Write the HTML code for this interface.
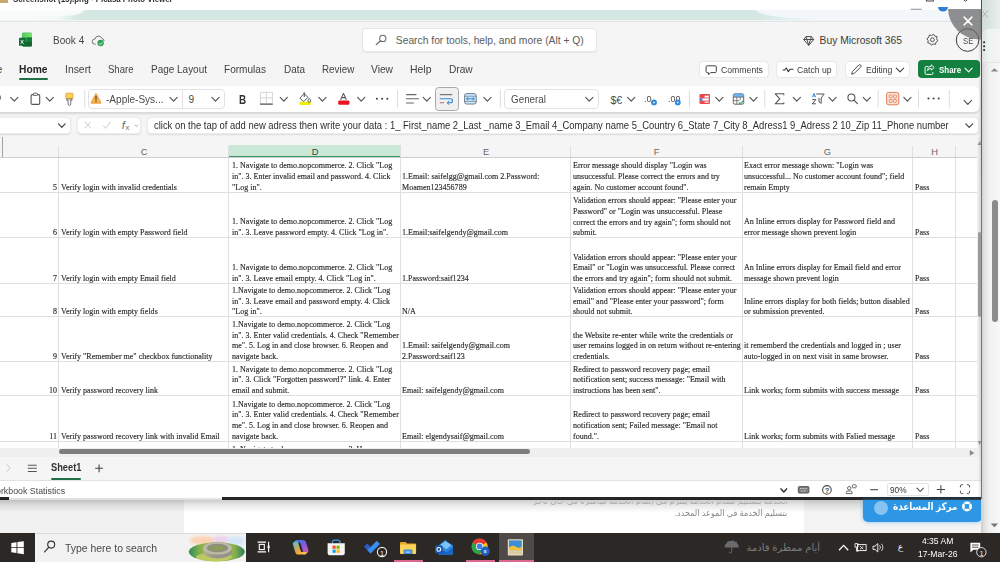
<!DOCTYPE html>
<html lang="en">
<head>
<meta charset="utf-8">
<title>Book 4</title>
<style>
*{box-sizing:border-box;margin:0;padding:0}
html,body{width:1000px;height:562px;overflow:hidden;background:#fff}
body{position:relative;font-family:"Liberation Sans",sans-serif;color:#2b2b2b;font-size:10px}
.a{position:absolute}
.t{position:absolute;white-space:nowrap;line-height:1;transform-origin:0 50%}
.ar{font-family:"Liberation Sans","DejaVu Sans",sans-serif;direction:rtl;transform-origin:100% 50%}
.c{position:absolute;font-family:"Liberation Serif",serif;font-size:8.7px;line-height:10.65px;color:#2c2c2c;-webkit-text-stroke:.16px #2c2c2c;white-space:nowrap;transform:scaleX(.924);transform-origin:0 0}
.n{transform-origin:100% 0;text-align:right}
.hl{position:absolute;left:0;width:977px;height:1px;background:#dfdfdf}
.vl{position:absolute;top:146px;width:1px;height:302px;background:#dfdfdf}
.ch{position:absolute;font-size:9.3px;color:#666;line-height:1;width:20px;margin-left:-10px;text-align:center}
.bx{position:absolute;background:#fff;border:1px solid #e3e3e3;border-radius:4px}
#ic{position:absolute;left:0;top:0;width:1000px;height:562px;overflow:hidden}
</style>
</head>
<body>
<div class="a" style="left:0;top:0;width:1000px;height:22px;background:#fff;overflow:hidden">
<div class="a" style="left:0;top:0;width:7.8px;height:2.8px;background:#c9a871"></div>
<div class="t" style="left:12.5px;top:-5px;font-size:9px;color:#2e2e2e;font-weight:bold;transform:scaleX(.875)">Screenshot (15).png - Picasa Photo Viewer</div>
<div class="a" style="left:0;top:9.5px;width:981px;height:10.5px;box-shadow:0 1px 0 #edf4f2;background:linear-gradient(90deg,#f8fbfa 0,#f4f9f8 6%,#d9eae7 7.6%,#d4e7e3 9%,#d4e7e3 77%,#e3efee 80%,#f2f7f9 83%,#f2f7f9 100%)"></div>
<div class="a" style="left:0;top:9.5px;width:84px;height:6px;background:#f8fbfa;border-radius:0 0 22px 0/0 0 6px 0"></div>
<div class="a" style="left:756px;top:9.5px;width:225px;height:8.5px;background:#f3f7fa;border-radius:0 0 0 56px/0 0 0 9px"></div>
</div>
<div class="a" style="left:0;top:21px;width:981px;height:477px;background:#f5f5f5;border-top:1px solid #e3e6e6"></div>
<div class="t" style="top:35.80px;font-size:10.4px;color:#444;left:52.6px;transform:scaleX(0.965);">Book 4</div>
<div class="bx" style="left:362px;top:28px;width:234.5px;height:23.5px;border-color:#e6e6e6;box-shadow:0 1px 1.5px rgba(0,0,0,.06)"></div>
<div class="t" style="top:35.68px;font-size:10.3px;color:#5c5c5c;left:395.8px;">Search for tools, help, and more (Alt + Q)</div>
<div class="t" style="top:35.78px;font-size:10.3px;color:#3b3b3b;left:819.6px;">Buy Microsoft 365</div>
<div class="t" style="top:37.02px;font-size:8.6px;color:#444;left:963px;transform:scaleX(0.9);">SE</div>
<div class="t" style="top:65.28px;font-size:10.3px;color:#424242;left:-3.5px;">e</div>
<div class="t" style="top:65.28px;font-size:10.3px;color:#242424;left:19.2px;font-weight:bold;transform:scaleX(0.995);">Home</div>
<div class="t" style="top:65.28px;font-size:10.3px;color:#424242;left:64.5px;transform:scaleX(1.009);">Insert</div>
<div class="t" style="top:65.28px;font-size:10.3px;color:#424242;left:107.5px;transform:scaleX(0.928);">Share</div>
<div class="t" style="top:65.28px;font-size:10.3px;color:#424242;left:150.5px;transform:scaleX(0.968);">Page Layout</div>
<div class="t" style="top:65.28px;font-size:10.3px;color:#424242;left:224px;transform:scaleX(0.978);">Formulas</div>
<div class="t" style="top:65.28px;font-size:10.3px;color:#424242;left:283.5px;transform:scaleX(0.965);">Data</div>
<div class="t" style="top:65.28px;font-size:10.3px;color:#424242;left:321.7px;transform:scaleX(0.956);">Review</div>
<div class="t" style="top:65.28px;font-size:10.3px;color:#424242;left:371px;transform:scaleX(0.993);">View</div>
<div class="t" style="top:65.28px;font-size:10.3px;color:#424242;left:410px;transform:scaleX(1.014);">Help</div>
<div class="t" style="top:65.28px;font-size:10.3px;color:#424242;left:448.8px;transform:scaleX(0.986);">Draw</div>
<div class="a" style="left:19px;top:78.2px;width:28.5px;height:2.2px;background:#1e7145;border-radius:1px"></div>
<div class="bx" style="left:699.3px;top:61px;width:69.5px;height:16.6px;border-color:#e8e8e8"></div>
<div class="bx" style="left:775.5px;top:61px;width:61.5px;height:16.6px;border-color:#e8e8e8"></div>
<div class="bx" style="left:844.7px;top:61px;width:65.8px;height:16.6px;border-color:#e8e8e8"></div>
<div class="a" style="left:917.5px;top:60.4px;width:62px;height:17.8px;background:#13803f;border-radius:4px"></div>
<div class="t" style="top:66.27px;font-size:8.9px;color:#3b3b3b;left:720.7px;transform:scaleX(0.978);">Comments</div>
<div class="t" style="top:66.27px;font-size:8.9px;color:#3b3b3b;left:796.9px;transform:scaleX(0.975);">Catch up</div>
<div class="t" style="top:66.27px;font-size:8.9px;color:#3b3b3b;left:866.4px;transform:scaleX(0.972);">Editing</div>
<div class="t" style="top:66.02px;font-size:8.6px;color:#fff;left:939.4px;font-weight:bold;transform:scaleX(0.925);">Share</div>
<div class="a" style="left:-10px;top:85.6px;width:989.5px;height:26.6px;background:#fff;border-radius:6px;box-shadow:0 1.6px 2.4px rgba(0,0,0,.13)"></div>
<div class="bx" style="left:88.3px;top:89px;width:136.3px;height:19.6px;border-color:#e2e2e2"></div>
<div class="a" style="left:182.3px;top:89.5px;width:1px;height:18.6px;background:#e2e2e2"></div>
<div class="t" style="top:95.05px;font-size:10.1px;color:#4a4a4a;left:105.6px;transform:scaleX(0.995);">-Apple-Sys...</div>
<div class="t" style="top:95.05px;font-size:10.1px;color:#4a4a4a;left:188.6px;">9</div>
<div class="t" style="top:93.40px;font-size:13px;color:#333;left:239.4px;font-weight:bold;transform:scaleX(0.76);">B</div>
<div class="a" style="left:435.2px;top:87.2px;width:23.4px;height:23.4px;border:1px solid #a9a9a9;border-radius:3.5px;background:#f0f0f0"></div>
<div class="bx" style="left:503.8px;top:88.8px;width:94.8px;height:20.2px;border-color:#e2e2e2"></div>
<div class="t" style="top:95.05px;font-size:10.1px;color:#4a4a4a;left:510.6px;transform:scaleX(0.975);">General</div>
<div class="t" style="top:94.83px;font-size:10.6px;color:#4a4a4a;left:610.4px;">$€</div>
<div class="t" style="top:93.67px;font-size:9.6px;color:#4a4a4a;left:644.2px;transform:scaleX(0.95);">.0</div>
<div class="t" style="top:93.67px;font-size:9.6px;color:#4a4a4a;left:667.8px;transform:scaleX(0.93);">.00</div>
<div class="bx" style="left:-5px;top:117.4px;width:75.5px;height:17px;border-color:#ececec;box-shadow:0 .5px 1.5px rgba(0,0,0,.1)"></div>
<div class="bx" style="left:77.3px;top:117.4px;width:63.8px;height:17px;border-color:#ececec;box-shadow:0 .5px 1.5px rgba(0,0,0,.1)"></div>
<div class="bx" style="left:147px;top:117.4px;width:831.6px;height:17px;border-color:#ececec;box-shadow:0 .5px 1.5px rgba(0,0,0,.1)"></div>
<div class="t" style="top:120.88px;font-size:10.3px;color:#2e2e2e;left:154px;transform:scaleX(0.9161);">click on the tap of add new adress then write your data : 1_ First_name 2_Last _name 3_Email 4_Company name 5_Country 6_State 7_City 8_Adress1 9_Adress 2 10_Zip 11_Phone number</div>
<div class="t" style="top:119.57px;font-size:11.5px;color:#6b6b6b;left:121.8px;font-style:italic;font-family:"Liberation Serif",serif;">f</div>
<div class="t" style="top:124.47px;font-size:7.6px;color:#6b6b6b;left:125.6px;font-family:"Liberation Serif",serif;">x</div>
<div class="a" style="left:0;top:157px;width:977px;height:291.6px;background:#fff"></div>
<div class="a" style="left:977px;top:137px;width:4px;height:320px;background:#efefef"></div>
<div class="a" style="left:228.8px;top:144.8px;width:171.9px;height:12.6px;background:#cbe7d6"></div>
<div class="a" style="left:228.8px;top:155.8px;width:171.9px;height:1.8px;background:#3a9666"></div>
<div class="a" style="left:2px;top:137px;width:1.2px;height:20px;background:#a2a2a2"></div>
<div class="vl" style="left:57.9px"></div>
<div class="vl" style="left:228.3px"></div>
<div class="vl" style="left:400.0px"></div>
<div class="vl" style="left:569.9px"></div>
<div class="vl" style="left:741.5px"></div>
<div class="vl" style="left:912.1px"></div>
<div class="vl" style="left:954.9px"></div>
<div class="ch" style="left:144px;top:147.73px;">C</div>
<div class="ch" style="left:315px;top:147.73px;color:#2c4a3a;">D</div>
<div class="ch" style="left:486px;top:147.73px;">E</div>
<div class="ch" style="left:656.6px;top:147.73px;">F</div>
<div class="ch" style="left:827.4px;top:147.73px;">G</div>
<div class="ch" style="left:934.5px;top:147.73px;">H</div>
<div class="hl" style="top:156.8px;background:#cfcfcf"></div>
<div class="hl" style="top:191.6px"></div>
<div class="hl" style="top:237.1px"></div>
<div class="hl" style="top:282.9px"></div>
<div class="hl" style="top:316.4px"></div>
<div class="hl" style="top:361.0px"></div>
<div class="hl" style="top:395.1px"></div>
<div class="hl" style="top:440.5px"></div>
<div class="c n" style="left:27px;width:30px;top:181.64px">5</div>
<div class="c" style="left:60.6px;top:181.64px">Verify login with invalid credentials</div>
<div class="c" style="left:231.6px;top:160.34px">1. Navigate to demo.nopcommerce. 2. Click "Log<br>in". 3. Enter invalid email and password. 4. Click<br>"Log in".</div>
<div class="c" style="left:402px;top:170.99px">1.Email: saifelgg@gmail.com 2.Password:<br>Moamen123456789</div>
<div class="c" style="left:572.5px;top:160.34px">Error message should display "Login was<br>unsuccessful. Please correct the errors and try<br>again. No customer account found".</div>
<div class="c" style="left:743.7px;top:160.34px">Exact error message shown: "Login was<br>unsuccessful... No customer account found"; field<br>remain Empty</div>
<div class="c" style="left:914.8px;top:181.64px">Pass</div>
<div class="c n" style="left:27px;width:30px;top:227.14px">6</div>
<div class="c" style="left:60.6px;top:227.14px">Verify login with empty Password field</div>
<div class="c" style="left:231.6px;top:216.49px">1. Navigate to demo.nopcommerce. 2. Click "Log<br>in". 3. Leave password empty. 4. Click "Log in".</div>
<div class="c" style="left:402px;top:227.14px">1.Email:saifelgendy@gmail.com</div>
<div class="c" style="left:572.5px;top:195.19px">Validation errors should appear: "Please enter your<br>Password" or "Login was unsuccessful. Please<br>correct the errors and try again"; form should not<br>submit.</div>
<div class="c" style="left:743.7px;top:216.49px">An Inline errors display for Password field and<br>error message shown prevent login</div>
<div class="c" style="left:914.8px;top:227.14px">Pass</div>
<div class="c n" style="left:27px;width:30px;top:272.94px">7</div>
<div class="c" style="left:60.6px;top:272.94px">Verify login with empty Email field</div>
<div class="c" style="left:231.6px;top:262.29px">1. Navigate to demo.nopcommerce. 2. Click "Log<br>in". 3. Leave email empty. 4. Click "Log in".</div>
<div class="c" style="left:402px;top:272.94px">1.Password:saif1234</div>
<div class="c" style="left:572.5px;top:251.64px">Validation errors should appear: "Please enter your<br>Email" or "Login was unsuccessful. Please correct<br>the errors and try again"; form should not submit.</div>
<div class="c" style="left:743.7px;top:262.29px">An Inline errors display for Email field and error<br>message shown prevent login</div>
<div class="c" style="left:914.8px;top:272.94px">Pass</div>
<div class="c n" style="left:27px;width:30px;top:306.44px">8</div>
<div class="c" style="left:60.6px;top:306.44px">Verify login with empty fields</div>
<div class="c" style="left:231.6px;top:285.14px">1.Navigate to demo.nopcommerce. 2. Click "Log<br>in". 3. Leave email and password empty. 4. Click<br>"Log in".</div>
<div class="c" style="left:402px;top:306.44px">N/A</div>
<div class="c" style="left:572.5px;top:285.14px">Validation errors should appear: "Please enter your<br>email" and "Please enter your password"; form<br>should not submit.</div>
<div class="c" style="left:743.7px;top:295.79px">Inline errors display for both fields; button disabled<br>or submission prevented.</div>
<div class="c" style="left:914.8px;top:306.44px">Pass</div>
<div class="c n" style="left:27px;width:30px;top:351.04px">9</div>
<div class="c" style="left:60.6px;top:351.04px">Verify "Remember me" checkbox functionality</div>
<div class="c" style="left:231.6px;top:319.09px">1.Navigate to demo.nopcommerce. 2. Click "Log<br>in". 3. Enter valid credentials. 4. Check "Remember<br>me". 5. Log in and close browser. 6. Reopen and<br>navigate back.</div>
<div class="c" style="left:402px;top:340.39px">1.Email: saifelgendy@gmail.com<br>2.Password:saif123</div>
<div class="c" style="left:572.5px;top:329.74px">the Website re-enter while write the credentials or<br>user remains logged in on return without re-entering<br>credentials.</div>
<div class="c" style="left:743.7px;top:340.39px">it rememberd the credentials and logged in ; user<br>auto-logged in on next visit in same browser.</div>
<div class="c" style="left:914.8px;top:351.04px">Pass</div>
<div class="c n" style="left:27px;width:30px;top:385.14px">10</div>
<div class="c" style="left:60.6px;top:385.14px">Verify password recovery link</div>
<div class="c" style="left:231.6px;top:363.84px">1. Navigate to demo.nopcommerce. 2. Click "Log<br>in". 3. Click "Forgotten password?" link. 4. Enter<br>email and submit.</div>
<div class="c" style="left:402px;top:385.14px">Email: saifelgendy@gmail.com</div>
<div class="c" style="left:572.5px;top:363.84px">Redirect to password recovery page; email<br>notification sent; success message: "Email with<br>instructions has been sent".</div>
<div class="c" style="left:743.7px;top:385.14px">Link works; form submits with success message</div>
<div class="c" style="left:914.8px;top:385.14px">Pass</div>
<div class="c n" style="left:27px;width:30px;top:430.54px">11</div>
<div class="c" style="left:60.6px;top:430.54px">Verify password recovery link with invalid Email</div>
<div class="c" style="left:231.6px;top:398.59px">1.Navigate to demo.nopcommerce. 2. Click "Log<br>in". 3. Enter valid credentials. 4. Check "Remember<br>me". 5. Log in and close browser. 6. Reopen and<br>navigate back.</div>
<div class="c" style="left:402px;top:430.54px">Email: elgendysaif@gmail.com</div>
<div class="c" style="left:572.5px;top:409.24px">Redirect to password recovery page; email<br>notification sent; Failed message: "Email not<br>found.".</div>
<div class="c" style="left:743.7px;top:430.54px">Link works; form submits with Falied message</div>
<div class="c" style="left:914.8px;top:430.54px">Pass</div>
<div class="a" style="left:229px;top:442.5px;width:172px;height:5.6px;overflow:hidden"><div class="c" style="left:2.6px;top:1.2px">1. Navigate to demo.nopcommerce. 2. H</div></div>
<div class="a" style="left:0;top:448.4px;width:981px;height:8.6px;background:#efefef"></div>
<div class="a" style="left:58.6px;top:449.4px;width:471.5px;height:4.6px;background:#7e7e7e;border-radius:2.3px"></div>
<div class="a" style="left:0;top:457px;width:981px;height:23.5px;background:#f5f5f5"></div>
<div class="t" style="top:463.48px;font-size:10.3px;color:#333;left:51px;font-weight:bold;transform:scaleX(0.9);">Sheet1</div>
<div class="a" style="left:51px;top:477.8px;width:30.3px;height:2.2px;background:#1e7145;border-radius:1px"></div>
<div class="a" style="left:0;top:480.2px;width:981px;height:17.3px;background:#fff;border-top:1px solid #e2e2e2"></div>
<div class="t" style="top:486.81px;font-size:9.2px;color:#4a4a4a;left:-4.2px;transform:scaleX(0.96);">orkbook Statistics</div>
<div class="bx" style="left:886.7px;top:482.6px;width:42.5px;height:13.2px;border-color:#e4e4e4;border-radius:2px"></div>
<div class="t" style="top:486.11px;font-size:9.2px;color:#333;left:890.4px;transform:scaleX(0.9);">90%</div>
<div class="a" style="left:0;top:497px;width:981px;height:36px;background:#fff"></div>
<div class="a" style="left:0;top:497px;width:183.5px;height:36px;background:#f1f1f1"></div>
<div class="a" style="left:804px;top:497px;width:177px;height:36px;background:#f4f4f4"></div>
<div class="a" style="left:0;top:499.5px;width:981px;height:13px;background:linear-gradient(180deg,rgba(0,0,0,.2),rgba(0,0,0,.09) 40%,rgba(0,0,0,.03) 75%,rgba(0,0,0,0))"></div>
<div class="a" style="left:0;top:497.2px;width:981px;height:2.6px;background:#262626"></div>
<div class="a" style="left:9px;top:496.8px;width:213px;height:3.2px;background:linear-gradient(180deg,#fff 0,#fff 40%,#c9c9c9 60%,#eee 100%)"></div>
<div class="t ar" style="right:212px;top:496.6px;font-size:8.6px;color:#a8a8a8;filter:blur(.7px);clip-path:inset(5.2px 0 0 0)">الخدمة بتسليم مقدم الخدمة يلتزم في إتمام الخدمة مباشرة في حال تأخر</div>
<div class="t ar" style="right:212.5px;top:509.2px;font-size:8.6px;color:#878787;transform:scaleX(.943)">بتسليم الخدمة في الموعد المحدد.</div>
<div class="a" style="left:862.5px;top:499.6px;width:119.5px;height:22.2px;background:#2e97e5;border-radius:0 0 5px 5px;box-shadow:0 0 4px rgba(46,151,229,.55)"></div>
<div class="a" style="left:874.2px;top:500.9px;width:14px;height:14px;border-radius:50%;background:#86c3f1"></div>
<div class="t ar" style="right:42.2px;top:501.6px;font-size:10.4px;font-weight:bold;color:#fff;transform:scaleX(.843)">مركز المساعدة</div>
<div class="a" style="left:981px;top:0;width:19px;height:533px;background:linear-gradient(90deg,#cdcdcd 0,#e4e4e4 22%,#f1f1f1 45%,#f8f8f8 100%)"></div>
<div class="a" style="left:981px;top:0;width:19px;height:30px;background:linear-gradient(90deg,#cfdbd8 0,#dbe6e3 50%,#e9f0ee 100%)"></div>
<div class="a" style="left:981px;top:29px;width:19px;height:33px;background:linear-gradient(90deg,#d9dfdd 0,#eef2f1 40%,#f2f5f4 100%);border-radius:8px 0 0 0"></div>
<div class="a" style="left:983px;top:62px;width:17px;height:1px;background:#e3e6e5"></div>
<div class="a" style="left:978px;top:9px;width:3px;height:489px;background:linear-gradient(90deg,rgba(0,0,0,0),rgba(0,0,0,.12))"></div>
<div class="a" style="left:978.4px;top:231.6px;width:2.8px;height:85.2px;background:#9b9b9b;border-radius:1.4px"></div>
<div class="a" style="left:980.8px;top:0;width:1.3px;height:499px;background:linear-gradient(180deg,#4f4f4f 0,#5a5a5a 20%,#787878 40%,#787878 100%)"></div>
<div class="a" style="left:992px;top:200px;width:6px;height:122px;background:#8b8b8b;border-radius:3px"></div>
<div class="a" style="left:0;top:532.6px;width:1000px;height:29.4px;background:#2b2826"></div>
<div class="a" style="left:35px;top:532.6px;width:211px;height:29.4px;background:#f2f2f2;border-top:1px solid #dadada"></div>
<div class="a" style="left:498.8px;top:532.6px;width:35px;height:29.4px;background:#4d4a48"></div>
<div class="t" style="top:543.37px;font-size:10.9px;color:#4a4a4a;left:65.3px;transform:scaleX(0.957);">Type here to search</div>
<div class="t" style="top:536.87px;font-size:8.9px;color:#fff;left:921.8px;transform:scaleX(0.962);">4:35 AM</div>
<div class="t" style="top:550.37px;font-size:8.9px;color:#fff;left:917.8px;transform:scaleX(0.962);">17-Mar-26</div>
<div class="t ar" style="right:180px;top:542.6px;font-size:10px;color:#7b7b7b">أيام ممطرة قادمة</div>
<div class="t ar" style="left:897.8px;top:543px;font-size:9px;color:#eee">ع</div>
<div class="a" style="left:393.8px;top:560.4px;width:28.8px;height:1.6px;background:#d9688a"></div>
<div class="a" style="left:465.5px;top:560.4px;width:29.5px;height:1.6px;background:#d9688a"></div>
<div class="a" style="left:498.8px;top:560.4px;width:35.0px;height:1.6px;background:#d9688a"></div>
<div class="t" style="top:486.87px;font-size:7.6px;color:#444;left:824.7px;font-weight:bold;">?</div>
<svg id="ic" viewBox="0 0 1000 562"><defs><linearGradient id="xg1" x1="0" y1="0" x2="1" y2="0"><stop offset="0" stop-color="#4ccf57"/><stop offset="1" stop-color="#7fe070"/></linearGradient></defs>
<rect x="22.2" y="32.8" width="9.8" height="13.6" rx="1.1" fill="#1d8f45"/>
<path d="M22.2 33.9 a1.1 1.1 0 0 1 1.1 -1.1 h7.600 a1.1 1.1 0 0 1 1.1 1.1 v3.7 h-9.800 z" fill="url(#xg1)"/>
<rect x="27.1" y="37.6" width="4.9" height="4.4" fill="#157a3a"/>
<path d="M22.2 42 h9.800 v3.300 a1.1 1.1 0 0 1 -1.1 1.1 h-7.600 a1.1 1.1 0 0 1 -1.1 -1.1 z" fill="#14642f"/>
<rect x="19" y="37.8" width="6.2" height="8" rx="0.9" fill="#136b36"/>
<path d="M20.7 39.9 L23.5 43.8 M23.5 39.9 L20.7 43.8" stroke="#e8f5ea" stroke-width="0.9" fill="none"/>
<path d="M95.3 44.2 h-0.6 a2.6 2.6 0 0 1 0.3 -5.2 a3.6 3.6 0 0 1 6.9 -0.6 a2.7 2.7 0 0 1 2.2 2.2" fill="none" stroke="#707070" stroke-width="1" stroke-linecap="round"/>
<circle cx="100.6" cy="43" r="3.2" fill="#2ea05a"/>
<path d="M99.1 43.5 l1.1 1.1 l2 -2.2" fill="none" stroke="#fff" stroke-width="0.9"/>
<circle cx="382.8" cy="38.4" r="3.1" fill="none" stroke="#666" stroke-width="1.05"/>
<line x1="380.6" y1="40.7" x2="376.2" y2="44.6" stroke="#666" stroke-width="1.15" stroke-linecap="round"/>
<path d="M806 36.6 h5.4 l2.3 2.9 l-5 6 l-5 -6 z M803.8 39.5 h9.8 M806.9 39.5 l1.8 5.6 l1.8 -5.6 M806 36.6 l0.9 2.9 M811.4 36.6 l-0.9 2.9" fill="none" stroke="#444" stroke-width="0.95" stroke-linejoin="round"/>
<polygon points="937.89,40.79 935.98,42.09 935.51,44.36 933.24,43.92 931.31,45.19 930.01,43.28 927.74,42.81 928.18,40.54 926.91,38.61 928.82,37.31 929.29,35.04 931.56,35.48 933.49,34.21 934.79,36.12 937.06,36.59 936.62,38.86" fill="none" stroke="#555" stroke-width="1" stroke-linejoin="round"/>
<circle cx="932.4" cy="39.7" r="1.9" fill="none" stroke="#555" stroke-width="1"/>
<circle cx="967.6" cy="40" r="11.3" fill="none" stroke="#3d3d3d" stroke-width="1"/>
<rect x="926.4" y="-2" width="7" height="3" fill="none" stroke="#444" stroke-width="1"/>
<path d="M961.5 -2 l4 3.2 l4 -3.2" fill="none" stroke="#444" stroke-width="1"/>
<line x1="910.6" y1="9.3" x2="921.6" y2="9.3" stroke="#9aa3a6" stroke-width="1.2"/>
<path d="M938 7 a5 4.5 0 0 0 10 0 z" fill="#2f7fd6"/>
<clipPath id="gc"><rect x="940" y="9" width="41" height="40"/></clipPath>
<circle cx="979.5" cy="8" r="31.5" fill="rgba(105,105,105,.74)" clip-path="url(#gc)"/>
<path d="M964.1 17.1 l7.8 7.8 M971.9 17.1 l-7.8 7.8" stroke="#fff" stroke-width="1.5" stroke-linecap="round"/>
<path d="M981.8 10.5 l6 7 M987.8 10.5 l-6 7" stroke="#9aa5a3" stroke-width="0.7"/>
<circle cx="984.1" cy="42.3" r="1" fill="#222"/>
<circle cx="984.1" cy="46.2" r="1" fill="#222"/>
<circle cx="984.1" cy="50.1" r="1" fill="#222"/>
<polygon points="990.8,71.6 998.2,71.6 994.5,68.2" fill="#8a8a8a"/>
<polygon points="990.6,523.5 998.2,523.5 994.4,527.3" fill="#777"/>
<path d="M707.3 65.8 h7.8 a1.2 1.2 0 0 1 1.2 1.2 v4.4 a1.2 1.2 0 0 1 -1.2 1.2 h-4.3 l-2.4 2 v-2 h-1.1 a1.2 1.2 0 0 1 -1.2 -1.2 v-4.4 a1.2 1.2 0 0 1 1.2 -1.2 z" fill="none" stroke="#444" stroke-width="1"/>
<path d="M783 70 h1.7 l1.5 -2 l2.2 3.6 l1.6 -2.3 h3" fill="none" stroke="#333" stroke-width="1.1" stroke-linejoin="round" stroke-linecap="round"/>
<path d="M851.6 74.2 l0.8 -2.7 l6.4 -6.4 a1.3 1.3 0 0 1 1.9 1.9 l-6.4 6.4 z" fill="none" stroke="#444" stroke-width="0.95" stroke-linejoin="round"/>
<polyline points="896.30,68.20 900.00,71.80 903.70,68.20" fill="none" stroke="#444" stroke-width="1.15" stroke-linecap="round" stroke-linejoin="round"/>
<path d="M928.5 66.5 h-2.2 a1.2 1.2 0 0 0 -1.2 1.2 v5.5 a1.2 1.2 0 0 0 1.2 1.2 h5.4 a1.2 1.2 0 0 0 1.2 -1.2 v-1" fill="none" stroke="#fff" stroke-width="1"/>
<path d="M931.2 64.8 l3 2.7 l-3 2.7 v-1.7 c-1.8 0 -2.9 0.8 -3.6 2.2 c0 -2.6 1.2 -4.2 3.6 -4.4 z" fill="none" stroke="#fff" stroke-width="0.9" stroke-linejoin="round"/>
<polyline points="965.00,68.20 968.60,71.80 972.20,68.20" fill="none" stroke="#fff" stroke-width="1.1" stroke-linecap="round" stroke-linejoin="round"/>
<path d="M-2 94.5 a3.2 3.2 0 0 1 0 6.2" fill="none" stroke="#666" stroke-width="1.1"/>
<polyline points="10.70,97.30 14.30,101.10 17.90,97.30" fill="none" stroke="#555" stroke-width="1.15" stroke-linecap="round" stroke-linejoin="round"/>
<rect x="31.1" y="94.6" width="8.6" height="9.8" rx="1.2" fill="none" stroke="#555" stroke-width="1.1"/>
<rect x="33.3" y="93.2" width="4.2" height="2.2" rx="0.8" fill="#fff" stroke="#555" stroke-width="0.9"/>
<polyline points="46.20,97.30 49.80,101.10 53.40,97.30" fill="none" stroke="#555" stroke-width="1.15" stroke-linecap="round" stroke-linejoin="round"/>
<rect x="65.8" y="93.2" width="7.2" height="5.6" rx="0.6" fill="#f8cf55" stroke="#e99b3a" stroke-width="0.8"/>
<path d="M66.8 99 h5.2 v1.3 h-1.3 v3.8 a1.3 1.3 0 0 1 -2.6 0 v-3.8 h-1.3 z" fill="#fff" stroke="#666" stroke-width="0.9" stroke-linejoin="round"/>
<line x1="84.8" y1="89.6" x2="84.8" y2="107.8" stroke="#dcdcdc" stroke-width="1"/>
<path d="M96 93.4 l4.9 9 a0.6 0.6 0 0 1 -0.5 0.9 h-8.8 a0.6 0.6 0 0 1 -0.5 -0.9 z" fill="#f7b64c" stroke="#e8913a" stroke-width="0.8" stroke-linejoin="round"/>
<path d="M96 96.4 v3.3" stroke="#4a3b20" stroke-width="1.1" stroke-linecap="round"/><circle cx="96" cy="101.4" r="0.65" fill="#4a3b20"/>
<polyline points="170.00,97.30 173.60,101.10 177.20,97.30" fill="none" stroke="#555" stroke-width="1.15" stroke-linecap="round" stroke-linejoin="round"/>
<polyline points="211.90,97.30 215.50,101.10 219.10,97.30" fill="none" stroke="#555" stroke-width="1.15" stroke-linecap="round" stroke-linejoin="round"/>
<path d="M260.4 92.3 h12 v11.2 h-12 z M266.4 92.3 v11.2 M260.4 97.9 h12" fill="none" stroke="#cfcfcf" stroke-width="0.9"/>
<line x1="260" y1="104.2" x2="272.8" y2="104.2" stroke="#666" stroke-width="1.3"/>
<polyline points="280.20,97.30 283.80,101.10 287.40,97.30" fill="none" stroke="#555" stroke-width="1.15" stroke-linecap="round" stroke-linejoin="round"/>
<rect x="299.4" y="101.8" width="11.4" height="3.2" rx="1" fill="#eef000"/>
<path d="M303.6 94.2 l-3 3 a1.2 1.2 0 0 0 0 1.7 l2 2 a1.2 1.2 0 0 0 1.7 0 l3.6 -3.6 l-4.2 -4.2 M304.3 92.6 v4" fill="none" stroke="#555" stroke-width="1" stroke-linejoin="round" stroke-linecap="round"/>
<path d="M309.2 98.3 c0.9 1.2 1.4 1.9 1.4 2.6 a1.4 1.4 0 0 1 -2.8 0 c0 -0.7 0.5 -1.4 1.4 -2.6 z" fill="#fff" stroke="#555" stroke-width="0.9"/>
<polyline points="318.80,97.30 322.40,101.10 326.00,97.30" fill="none" stroke="#555" stroke-width="1.15" stroke-linecap="round" stroke-linejoin="round"/>
<rect x="338.2" y="100.6" width="11.2" height="4.1" rx="1.2" fill="#e8131d"/>
<path d="M340.6 99.8 l2.9 -6.4 l2.9 6.4 M341.7 97.6 h3.6" fill="none" stroke="#555" stroke-width="1.05" stroke-linejoin="round"/>
<polyline points="357.60,97.30 361.20,101.10 364.80,97.30" fill="none" stroke="#555" stroke-width="1.15" stroke-linecap="round" stroke-linejoin="round"/>
<circle cx="376.9" cy="98.8" r="1.05" fill="#444"/>
<circle cx="382.1" cy="98.8" r="1.05" fill="#444"/>
<circle cx="387.3" cy="98.8" r="1.05" fill="#444"/>
<line x1="397.5" y1="90" x2="397.5" y2="107.5" stroke="#dcdcdc" stroke-width="1"/>
<path d="M406.5 94.6 h9.5 M406.5 98.8 h12 M406.5 103 h7" stroke="#666" stroke-width="1.1" stroke-linecap="round"/>
<polyline points="423.20,97.30 426.80,101.10 430.40,97.30" fill="none" stroke="#555" stroke-width="1.15" stroke-linecap="round" stroke-linejoin="round"/>
<path d="M440.2 94.6 h11.6" stroke="#777" stroke-width="1.1" stroke-linecap="round"/>
<path d="M440.2 98.8 h10.3 a2 2 0 0 1 0 4 h-3" fill="none" stroke="#2f86d6" stroke-width="1.1" stroke-linecap="round"/>
<path d="M449 101.2 l-1.9 1.6 l1.9 1.6" fill="none" stroke="#2f86d6" stroke-width="1" stroke-linecap="round" stroke-linejoin="round"/>
<path d="M440.2 102.8 h3.4" stroke="#b56a6a" stroke-width="1.1" stroke-linecap="round"/>
<rect x="464.6" y="93.6" width="11.6" height="10.4" rx="2" fill="#d4ebfb" stroke="#5b7185" stroke-width="0.9"/>
<path d="M464.6 96.2 h11.6 M464.6 101.4 h11.6" stroke="#5b7185" stroke-width="0.7"/>
<path d="M466.6 98.8 h7.6 M468.2 97.3 l-1.7 1.5 l1.7 1.5 M472.6 97.3 l1.7 1.5 l-1.7 1.5" fill="none" stroke="#2a7fd0" stroke-width="1" stroke-linejoin="round"/>
<polyline points="483.80,97.30 487.40,101.10 491.00,97.30" fill="none" stroke="#555" stroke-width="1.15" stroke-linecap="round" stroke-linejoin="round"/>
<line x1="500.3" y1="90" x2="500.3" y2="107.5" stroke="#dcdcdc" stroke-width="1"/>
<polyline points="585.70,97.30 589.30,101.10 592.90,97.30" fill="none" stroke="#555" stroke-width="1.15" stroke-linecap="round" stroke-linejoin="round"/>
<polyline points="627.60,97.30 631.20,101.10 634.80,97.30" fill="none" stroke="#555" stroke-width="1.15" stroke-linecap="round" stroke-linejoin="round"/>
<circle cx="654" cy="102.4" r="2.9" fill="#2c8ad8"/><circle cx="654" cy="102.4" r="1" fill="#cfe6f8"/>
<circle cx="677.8" cy="102.4" r="2.9" fill="#2c8ad8"/><circle cx="677.8" cy="102.4" r="1" fill="#cfe6f8"/>
<line x1="689.4" y1="90" x2="689.4" y2="107.5" stroke="#dcdcdc" stroke-width="1"/>
<rect x="699.5" y="94" width="10.5" height="10" rx="1.2" fill="#e9484d"/>
<rect x="704.6" y="95.6" width="4.2" height="2" fill="#fff"/><rect x="701" y="98.4" width="7.8" height="2.2" fill="#fff"/><rect x="704.6" y="101.4" width="4.2" height="1.6" fill="#f6c9c9"/>
<rect x="700" y="98.4" width="2.6" height="2.2" fill="#3a86d8"/>
<polyline points="715.70,97.30 719.30,101.10 722.90,97.30" fill="none" stroke="#555" stroke-width="1.15" stroke-linecap="round" stroke-linejoin="round"/>
<rect x="733.3" y="93.8" width="10.4" height="10.4" rx="1.6" fill="#fff" stroke="#555" stroke-width="0.9"/>
<path d="M733.6 95 a1.4 1.4 0 0 1 1.3 -1.2 h7.2 a1.4 1.4 0 0 1 1.3 1.2 v2 h-9.8 z" fill="#6db3ee"/>
<path d="M733.3 97.2 h10.4 M733.3 100.6 h6 M736.8 97.2 v7 M740.2 97.2 v3" stroke="#555" stroke-width="0.7" fill="none"/>
<path d="M738.8 102.4 l1.6 1.6 l3.4 -3.8" fill="none" stroke="#3aa86a" stroke-width="1.2"/>
<polyline points="749.90,97.30 753.50,101.10 757.10,97.30" fill="none" stroke="#555" stroke-width="1.15" stroke-linecap="round" stroke-linejoin="round"/>
<line x1="764.8" y1="90" x2="764.8" y2="107.5" stroke="#dcdcdc" stroke-width="1"/>
<path d="M783.8 95.2 v-1.4 h-8.6 l4.6 5 l-4.6 5 h8.6 v-1.4" fill="none" stroke="#555" stroke-width="1.1" stroke-linejoin="round"/>
<polyline points="793.20,97.30 796.80,101.10 800.40,97.30" fill="none" stroke="#555" stroke-width="1.15" stroke-linecap="round" stroke-linejoin="round"/>
<path d="M816.2 94 h8 l-3 3.9 v5.4 l-2.2 -1.4 v-4" fill="none" stroke="#555" stroke-width="1" stroke-linejoin="round"/>
<path d="M812.3 97.3 l1.7 -4 l1.7 4 M812.9 96 h2.2" fill="none" stroke="#3a86d8" stroke-width="0.9"/>
<path d="M812.4 99.6 h3.4 l-3.4 4.2 h3.4" fill="none" stroke="#444" stroke-width="0.95"/>
<polyline points="828.90,97.30 832.50,101.10 836.10,97.30" fill="none" stroke="#555" stroke-width="1.15" stroke-linecap="round" stroke-linejoin="round"/>
<circle cx="851.4" cy="97.5" r="3.5" fill="none" stroke="#555" stroke-width="1.1"/><line x1="854" y1="100.2" x2="857.4" y2="103.6" stroke="#555" stroke-width="1.2" stroke-linecap="round"/>
<polyline points="863.20,97.30 866.80,101.10 870.40,97.30" fill="none" stroke="#555" stroke-width="1.15" stroke-linecap="round" stroke-linejoin="round"/>
<line x1="878.2" y1="90" x2="878.2" y2="107.5" stroke="#dcdcdc" stroke-width="1"/>
<rect x="886.6" y="92.4" width="12.2" height="12.4" rx="2.2" fill="#fde3d6" stroke="#e2764a" stroke-width="0.95"/>
<rect x="889.3" y="95" width="2.7" height="2.9" rx="0.5" fill="#fff5ef" stroke="#e2764a" stroke-width="0.8"/>
<rect x="893.6" y="95" width="2.7" height="2.9" rx="0.5" fill="#fff5ef" stroke="#e2764a" stroke-width="0.8"/>
<rect x="889.3" y="99.5" width="2.7" height="2.9" rx="0.5" fill="#fff5ef" stroke="#e2764a" stroke-width="0.8"/>
<rect x="893.6" y="99.5" width="2.7" height="2.9" rx="0.5" fill="#fff5ef" stroke="#e2764a" stroke-width="0.8"/>
<polyline points="903.80,97.30 907.40,101.10 911.00,97.30" fill="none" stroke="#555" stroke-width="1.15" stroke-linecap="round" stroke-linejoin="round"/>
<line x1="918.5" y1="90" x2="918.5" y2="107.5" stroke="#dcdcdc" stroke-width="1"/>
<circle cx="928.5" cy="98.5" r="1.05" fill="#444"/>
<circle cx="933.6" cy="98.5" r="1.05" fill="#444"/>
<circle cx="938.7" cy="98.5" r="1.05" fill="#444"/>
<line x1="949.3" y1="90" x2="949.3" y2="107.5" stroke="#dcdcdc" stroke-width="1"/>
<polyline points="964.10,100.30 967.80,104.30 971.50,100.30" fill="none" stroke="#555" stroke-width="1.15" stroke-linecap="round" stroke-linejoin="round"/>
<polyline points="58.50,123.80 61.80,127.40 65.10,123.80" fill="none" stroke="#444" stroke-width="1.2" stroke-linecap="round" stroke-linejoin="round"/>
<path d="M84.7 121.5 l6.2 6.6 M90.9 121.5 l-6.2 6.6" stroke="#c4c4c4" stroke-width="0.9"/>
<path d="M103.2 125.6 l2.4 2.7 l5 -6.6" fill="none" stroke="#c4c4c4" stroke-width="0.9"/>
<polyline points="135.00,125.00 136.40,126.60 137.80,125.00" fill="none" stroke="#9a9a9a" stroke-width="0.8" stroke-linecap="round" stroke-linejoin="round"/>
<polyline points="965.80,123.80 969.20,127.40 972.60,123.80" fill="none" stroke="#444" stroke-width="1.2" stroke-linecap="round" stroke-linejoin="round"/>
<polygon points="977.7,145 981,145 980.2,140.6" fill="#8a8a8a"/>
<polygon points="969.8,450 969.8,455.8 974.2,452.9" fill="#8a8a8a"/>
<polygon points="977.6,441 981,441 980,445" fill="#8a8a8a"/>
<path d="M6.6 464.4 l3.6 3.9 l-3.6 3.9" fill="none" stroke="#c8c8c8" stroke-width="1"/>
<path d="M27.8 465.2 h9 M27.8 468.3 h9 M27.8 471.4 h9" stroke="#555" stroke-width="1.05"/>
<path d="M95.2 468.3 h7.8 M99.1 464.4 v7.8" stroke="#444" stroke-width="1.1"/>
<polyline points="781.00,488.90 783.80,491.90 786.60,488.90" fill="none" stroke="#333" stroke-width="1.5" stroke-linecap="round" stroke-linejoin="round"/>
<rect x="798.3" y="486.6" width="10.6" height="6.4" rx="1" fill="#7a7a7a" stroke="#555" stroke-width="0.95"/>
<path d="M800 488.600 h7.200 M800.800 491 h5.600" stroke="#e8e8e8" stroke-width="0.9" stroke-dasharray="1 0.6"/>
<circle cx="826.9" cy="489.9" r="4.3" fill="none" stroke="#4a4a4a" stroke-width="1.15"/>
<circle cx="849.2" cy="488.2" r="1.7" fill="none" stroke="#555" stroke-width="0.9"/><path d="M846.3 493.6 v-1 a1.6 1.6 0 0 1 1.6 -1.6 h2.6 a1.6 1.6 0 0 1 1.6 1.6 v1 z" fill="none" stroke="#555" stroke-width="0.9"/>
<rect x="852.4" y="484.8" width="3.8" height="3" rx="0.8" fill="none" stroke="#555" stroke-width="0.85"/>
<line x1="870.2" y1="489.7" x2="878" y2="489.7" stroke="#444" stroke-width="1.05"/>
<polyline points="917.00,488.10 920.20,491.50 923.40,488.10" fill="none" stroke="#444" stroke-width="1.05" stroke-linecap="round" stroke-linejoin="round"/>
<path d="M936.8 489.4 h8.2 M940.9 485.2 v8.4" stroke="#444" stroke-width="1.05"/>
<path d="M960.4 487.4 v-1.4 a1.3 1.3 0 0 1 1.3 -1.3 h1.4 M966.8 484.7 h1.4 a1.3 1.3 0 0 1 1.3 1.3 v1.4 M969.5 490.8 v1.4 a1.3 1.3 0 0 1 -1.3 1.3 h-1.4 M963.1 493.5 h-1.4 a1.3 1.3 0 0 1 -1.3 -1.3 v-1.4" fill="none" stroke="#555" stroke-width="1"/>
<circle cx="967" cy="506.5" r="3.7" fill="none" stroke="#fff" stroke-width="2.6"/>
<path d="M963.6 503.1 l1.9 1.9 M970.4 503.1 l-1.9 1.9 M963.6 509.9 l1.9 -1.9 M970.4 509.9 l-1.9 -1.9" stroke="#2e97e5" stroke-width="1"/>
<path d="M11.3 543 l5.2 -0.75 v5 h-5.2 z M17.4 542.1 l6.4 -0.95 v6.1 h-6.4 z M11.3 548.1 h5.2 v5 l-5.2 -0.75 z M17.4 548.1 h6.4 v6.1 l-6.4 -0.95 z" fill="#fff"/>
<circle cx="51.2" cy="544.6" r="3.5" fill="none" stroke="#333" stroke-width="1.1"/><line x1="48.7" y1="547.3" x2="44.6" y2="551.9" stroke="#333" stroke-width="1.2" stroke-linecap="round"/>
<clipPath id="cp"><rect x="186" y="533.6" width="60" height="28.4"/></clipPath>
<defs><filter id="bl" x="-20%" y="-40%" width="140%" height="180%"><feGaussianBlur stdDeviation="1.6"/></filter><filter id="bl2" x="-10%" y="-20%" width="120%" height="140%"><feGaussianBlur stdDeviation="0.5"/></filter><linearGradient id="gr" x1="0" y1="0" x2="1" y2="0"><stop offset="0" stop-color="#2f8a58"/><stop offset=".18" stop-color="#7fae4c"/><stop offset=".5" stop-color="#b4c556"/><stop offset=".82" stop-color="#86b14e"/><stop offset="1" stop-color="#2c7c58"/></linearGradient><linearGradient id="wl" x1="0" y1="0" x2="1" y2="0"><stop offset="0" stop-color="#b9b08e"/><stop offset=".4" stop-color="#9a968a"/><stop offset="1" stop-color="#8f9286"/></linearGradient></defs>
<g clip-path="url(#cp)"><g filter="url(#bl)"><ellipse cx="203" cy="540.5" rx="13" ry="4.5" fill="#fbd3b4"/><ellipse cx="221" cy="539.5" rx="9" ry="4" fill="#ecd3ee"/><ellipse cx="236" cy="541" rx="9" ry="4.5" fill="#d3e6f8"/></g><g filter="url(#bl2)"><ellipse cx="216.8" cy="551.8" rx="28" ry="9.600" fill="url(#gr)"/><ellipse cx="214" cy="557" rx="18" ry="4.200" fill="#c3cc66" opacity=".85"/><path d="M203.200 548.400 a14.400 6.600 0 0 1 28.800 0 v3.400 a14.400 6.600 0 0 1 -28.800 0 z" fill="url(#wl)"/><ellipse cx="217.600" cy="548.200" rx="14.400" ry="6.400" fill="#bdb9a4"/><ellipse cx="217.400" cy="548" rx="10.800" ry="4.300" fill="#8d8f7e"/><ellipse cx="217.200" cy="548.300" rx="7.600" ry="2.500" fill="#8c9a5c"/></g></g>
<path d="M257.6 542.2 h8.4 M257.6 551.8 h8.4" stroke="#fff" stroke-width="1.2"/>
<rect x="259.3" y="544.4" width="5" height="5.2" fill="none" stroke="#fff" stroke-width="1.1"/>
<path d="M268.6 541.8 v10.4" stroke="#fff" stroke-width="1.1"/><rect x="267.6" y="545.6" width="2" height="2.6" fill="#fff"/>
<defs><linearGradient id="cg1" x1="0" y1="0" x2="1" y2="1"><stop offset="0" stop-color="#2a7de1"/><stop offset=".5" stop-color="#7b5be6"/><stop offset="1" stop-color="#e0559c"/></linearGradient><linearGradient id="cg2" x1="0" y1="0" x2="1" y2="1"><stop offset="0" stop-color="#36c3e6"/><stop offset=".55" stop-color="#f0a13a"/><stop offset="1" stop-color="#f5d24a"/></linearGradient></defs>
<path d="M296.5 540 h6.5 c1.6 0 2.6 1 3 2.4 l2.4 7.6 c0.5 1.8 -0.6 3.2 -2.4 3.2 h-2.6 l-2.6 -9 c-0.3 -1 -1 -1.6 -2 -1.6 h-4.4 c0.3 -1.6 1 -2.6 2.100 -2.600 z" fill="url(#cg1)"/>
<path d="M304.800 554.600 h-6.500 c-1.600 0 -2.600 -1 -3 -2.400 l-2.400 -7.600 c-0.500 -1.800 0.600 -3.200 2.400 -3.200 h2.600 l2.600 9 c0.300 1 1 1.600 2 1.600 h4.400 c-0.300 1.600 -1 2.600 -2.100 2.600 z" fill="url(#cg2)"/>
<path d="M332.300 543.500 v-1.200 a2.200 2.200 0 0 1 2.200 -2.200 h3.400 a2.200 2.200 0 0 1 2.200 2.200 v1.200" fill="none" stroke="#3a9be8" stroke-width="1.2"/>
<path d="M327.600 543.300 h17.200 v9.800 a2.200 2.200 0 0 1 -2.200 2.200 h-12.800 a2.200 2.200 0 0 1 -2.200 -2.200 z" fill="#f4f4f4"/>
<rect x="332.500" y="545.600" width="3.200" height="3.200" fill="#f25022"/><rect x="336.500" y="545.600" width="3.200" height="3.200" fill="#7fba00"/><rect x="332.500" y="549.600" width="3.200" height="3.200" fill="#00a4ef"/><rect x="336.500" y="549.600" width="3.200" height="3.200" fill="#ffb900"/>
<path d="M364 546.800 l3.200 -3.200 l6.600 6.600 l-3.200 3.200 z" fill="#2560c9"/>
<path d="M367.400 550.200 l9.400 -9.400 l3.200 3.200 l-9.400 9.400 z" fill="#3c8df0"/>
<circle cx="382" cy="552" r="4.600" fill="#2b2826" stroke="#f0f0f0" stroke-width="1.100"/>
<path d="M400 543 a1 1 0 0 1 1 -1 h4.500 l1.600 1.600 h8 a1 1 0 0 1 1 1 v2 h-16.100 z" fill="#e9a825"/>
<rect x="400" y="544.600" width="16.100" height="9.400" rx="1" fill="#fbd35a"/>
<path d="M403.600 554 v-3.400 a1 1 0 0 1 1 -1 h6.800 a1 1 0 0 1 1 1 v3.400 z" fill="#3f8fe0"/>
<rect x="405.600" y="551.600" width="4.800" height="1" fill="#cfe4f8"/>
<path d="M438.500 545.500 l6.500 -5.500 l8 5.500 v8 a1.600 1.600 0 0 1 -1.600 1.600 h-11.300 a1.600 1.600 0 0 1 -1.600 -1.600 z" fill="#2e86e0"/>
<path d="M440.500 544.800 l5 -3.600 l6 4 l-5.500 4 z" fill="#7cc3f7"/>
<path d="M438.500 547.500 l8 4.800 l6.500 -4.800 v6 a1.600 1.600 0 0 1 -1.600 1.600 h-11.300 a1.600 1.600 0 0 1 -1.600 -1.600 z" fill="#1a64c2"/>
<rect x="435" y="545.600" width="7.600" height="7.600" rx="1.300" fill="#1557b0"/>
<circle cx="438.800" cy="549.400" r="1.900" fill="none" stroke="#fff" stroke-width="1.100"/>
<circle cx="479.600" cy="546.400" r="8" fill="#e33b2e"/>
<path d="M479.600 546.400 L472.700 542.400 A8 8 0 0 0 479.600 554.400 L483.500 549 z" fill="#2ba24c"/>
<path d="M479.600 546.400 L486.500 542.400 A8 8 0 0 1 479.600 554.400 L483.400 548.400 z" fill="#fbc116"/>
<path d="M472.700 542.400 A8 8 0 0 1 486.500 542.400 L479.600 542.600 z" fill="#e33b2e"/>
<circle cx="479.600" cy="546.400" r="3.600" fill="#fff"/><circle cx="479.600" cy="546.400" r="2.800" fill="#3b7de8"/>
<circle cx="485.200" cy="551.200" r="4.600" fill="#1f5fbf"/>
<rect x="507.800" y="539.200" width="15.200" height="16.200" rx="1" fill="#e8dcc0"/>
<rect x="509" y="540.400" width="12.800" height="9.800" fill="#3b8fd6"/>
<path d="M509 547.400 c3 -2.200 5 -2.200 7 -0.600 c2 1.400 4 1 5.800 -0.400 v3.800 h-12.800 z" fill="#f2c23a"/>
<rect x="509" y="551.200" width="12.800" height="3" fill="#d8c9a3"/>
<path d="M724.500 547.500 a7.200 6.800 0 0 1 14.400 0 z" fill="#6a6a6a"/><path d="M731.700 547.500 v4.200 a1.300 1.300 0 0 1 -2.600 0" fill="none" stroke="#6a6a6a" stroke-width="1"/>
<path d="M733.500 540.500 l-0.800 1.400 M736.500 541.500 l-0.800 1.400 M728.500 540.800 l-0.800 1.400" stroke="#3b6ea8" stroke-width="0.900"/>
<path d="M839 550.200 l4.600 -4.800 l4.600 4.800" fill="none" stroke="#fff" stroke-width="1.300"/>
<rect x="857.500" y="544.600" width="8.600" height="6" fill="none" stroke="#fff" stroke-width="0.900"/><path d="M855 543.600 h3 v3.600 h-3 z M856.500 547.200 v4 h2" fill="none" stroke="#fff" stroke-width="0.800"/><path d="M860 546.200 l3.400 3 M863.400 546.200 l-3.400 3" stroke="#fff" stroke-width="0.800"/>
<path d="M873 546.200 h2 l2.800 -2.600 v8.400 l-2.800 -2.600 h-2 z" fill="none" stroke="#fff" stroke-width="0.900" stroke-linejoin="round"/><path d="M879.600 545.400 a3 3 0 0 1 0 4 M881.400 543.800 a5.200 5.200 0 0 1 0 7.200" fill="none" stroke="#fff" stroke-width="0.800"/>
<path d="M970.400 542.800 h9.800 v7 h-6.800 l-3 2.800 z" fill="#fff"/><path d="M972 545 h6.600 M972 547.200 h6.600" stroke="#2b2826" stroke-width="0.800"/>
<circle cx="981.400" cy="552.200" r="4.700" fill="#2b2826" stroke="#eee" stroke-width="0.900"/></svg>
<div class="t" style="top:550.68px;font-size:6.4px;color:#fff;left:380.3px;">1</div>
<div class="t" style="top:550.61px;font-size:6.6px;color:#fff;left:979.7px;">1</div>
<div class="t" style="top:549.36px;font-size:5.6px;color:#fff;left:483.6px;font-weight:bold;">s</div>
</body>
</html>
